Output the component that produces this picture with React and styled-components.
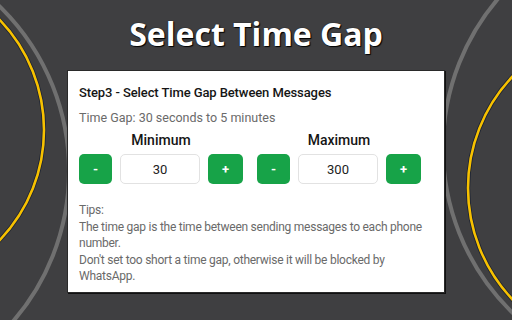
import React, { useState } from 'react'
import styled, { createGlobalStyle } from 'styled-components'

const GlobalStyle = createGlobalStyle`
  html, body {
    margin: 0;
    padding: 0;
    background: #3f3f41;
  }
  body {
    width: 512px;
    height: 320px;
    overflow: hidden;
    font-family: Roboto, "Liberation Sans", Arial, sans-serif;
  }
`

const Page = styled.div`
  position: relative;
  width: 512px;
  height: 320px;
  display: flex;
  flex-direction: column;
  align-items: center;
`

const Backdrop = styled.svg`
  position: absolute;
  inset: 0;
  width: 512px;
  height: 320px;
  z-index: 0;
`

const Title = styled.h1`
  position: relative;
  z-index: 1;
  margin: 12px 0 0;
  font-family: "Open Sans", sans-serif;
  font-weight: 700;
  font-size: 32px;
  line-height: 44px;
  color: #ffffff;
  text-shadow: 0 0 1px #000, 1px 1px 1px #000;
`

const Card = styled.div`
  position: relative;
  z-index: 1;
  margin-top: 14px;
  width: 378px;
  height: 223px;
  box-sizing: border-box;
  background: #ffffff;
  border: 1px solid #2a2a2a;
  box-shadow: 1px 1px 0 #111;
  padding: 14px 11px 9px;
  display: flex;
  flex-direction: column;
`

const StepTitle = styled.div`
  font-size: 13px;
  line-height: 16px;
  font-weight: 500;
  letter-spacing: -0.1px;
  color: #151515;
`

const Hint = styled.div`
  margin-top: 9px;
  font-size: 12.5px;
  line-height: 16px;
  color: #6a6a6a;
`

const Controls = styled.div`
  display: flex;
  gap: 14px;
  margin-top: 5px;
`

const Group = styled.div`
  display: flex;
  flex-direction: column;
  align-items: center;
  gap: 5px;
`

const Label = styled.div`
  font-size: 14px;
  line-height: 18px;
  font-weight: 500;
  color: #151515;
`

const Stepper = styled.div`
  display: flex;
  gap: 8px;
`

const StepButton = styled.button`
  width: ${p => (p.$wide ? 35 : 33)}px;
  height: 30px;
  border: none;
  border-radius: 5px;
  background: #17a348;
  color: #ffffff;
  font-family: inherit;
  font-size: 13px;
  font-weight: 700;
  padding: 0;
  cursor: pointer;
`

const ValueInput = styled.input`
  width: 80px;
  height: 30px;
  box-sizing: border-box;
  border: 1px solid #e2e2e2;
  border-radius: 5px;
  text-align: center;
  font-family: inherit;
  font-size: 13px;
  color: #222;
  outline: none;
`

const Tips = styled.div`
  margin-top: 18px;
  font-size: 12px;
  line-height: 16.5px;
  letter-spacing: -0.25px;
  color: #6a6a6a;
`

const Counter = ({ label, value, onChange }) => (
  <Group>
    <Label>{label}</Label>
    <Stepper>
      <StepButton onClick={() => onChange(value - 1)}>-</StepButton>
      <ValueInput value={value} onChange={e => onChange(Number(e.target.value) || 0)} />
      <StepButton $wide onClick={() => onChange(value + 1)}>+</StepButton>
    </Stepper>
  </Group>
)

const Arc = ({ cx, cy, r, yellow }) =>
  yellow ? (
    <g fill="none">
      <circle cx={cx} cy={cy} r={r} stroke="#1b2232" strokeWidth="4.2" />
      <circle cx={cx} cy={cy} r={r} stroke="#f7c100" strokeWidth="2.6" />
    </g>
  ) : (
    <circle cx={cx} cy={cy} r={r} fill="none" stroke="#707070" strokeWidth="4" />
  )

export default function App() {
  const [min, setMin] = useState(30)
  const [max, setMax] = useState(300)

  return (
    <Page>
      <GlobalStyle />
      <Backdrop viewBox="0 0 512 320">
        <Arc cx={-161} cy={171} r={230} />
        <Arc cx={-115} cy={130} r={159} yellow />
        <Arc cx={673} cy={148} r={230} />
        <Arc cx={630} cy={188} r={162} yellow />
      </Backdrop>
      <Title>Select Time Gap</Title>
      <Card>
        <StepTitle>Step3 - Select Time Gap Between Messages</StepTitle>
        <Hint>Time Gap: 30 seconds to 5 minutes</Hint>
        <Controls>
          <Counter label="Minimum" value={min} onChange={setMin} />
          <Counter label="Maximum" value={max} onChange={setMax} />
        </Controls>
        <Tips>
          Tips:
          <br />
          The time gap is the time between sending messages to each phone number.
          <br />
          Don't set too short a time gap, otherwise it will be blocked by WhatsApp.
        </Tips>
      </Card>
    </Page>
  )
}
